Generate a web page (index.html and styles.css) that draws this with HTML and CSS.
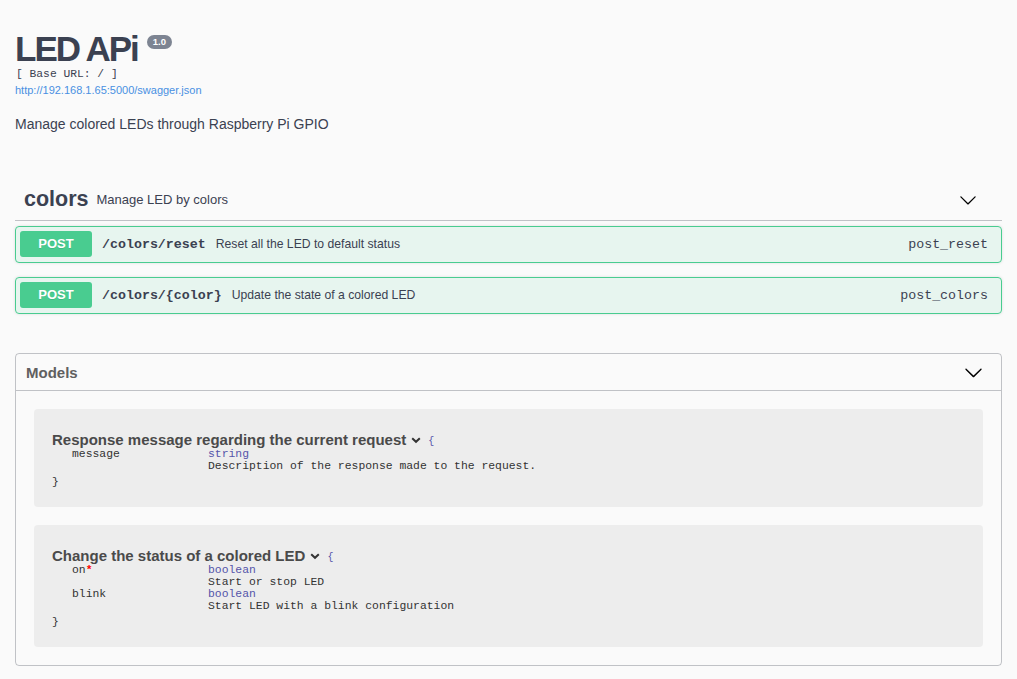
FILE: index.html
```html
<!DOCTYPE html>
<html lang="en">
<head>
<meta charset="utf-8">
<title>LED APi</title>
<link rel="stylesheet" href="styles.css">
</head>
<body>
<div class="wrapper">
  <div class="info">
    <h2 class="title"><span class="title-text">LED APi</span><span class="version">1.0</span></h2>
    <div class="base-url">[ Base URL: / ]</div>
    <a class="spec-link" href="#">http://192.168.1.65:5000/swagger.json</a>
    <p class="description">Manage colored LEDs through Raspberry Pi GPIO</p>
  </div>

  <section class="tag-section">
    <div class="tag-header">
      <h4 class="tag-title"><span class="tag-name">colors</span><small class="tag-desc">Manage LED by colors</small></h4>
      <svg class="chevron chevron-tag" viewBox="0 0 20 20"><path d="M17.418 6.109c.272-.268.709-.268.979 0s.271.701 0 .969l-7.908 7.83c-.27.268-.707.268-.979 0l-7.908-7.830c-.27-.268-.27-.701 0-.969.271-.268.709-.268.979 0L10 13.25l7.418-7.141z"/></svg>
    </div>
    <div class="ops">
      <div class="opblock">
        <span class="method">POST</span>
        <span class="path">/colors/reset</span>
        <span class="op-desc">Reset all the LED to default status</span>
        <span class="op-id">post_reset</span>
      </div>
      <div class="opblock">
        <span class="method">POST</span>
        <span class="path">/colors/{color}</span>
        <span class="op-desc">Update the state of a colored LED</span>
        <span class="op-id">post_colors</span>
      </div>
    </div>
  </section>

  <section class="models">
    <div class="models-header">
      <h4 class="models-title">Models</h4>
      <svg class="chevron chevron-models" viewBox="0 0 20 20"><path d="M17.418 6.109c.272-.268.709-.268.979 0s.271.701 0 .969l-7.908 7.83c-.27.268-.707.268-.979 0l-7.908-7.83c-.27-.268-.27-.701 0-.969.271-.268.709-.268.979 0L10 13.25l7.418-7.141z"/></svg>
    </div>
    <div class="models-body">
      <div class="model-box">
        <div class="model-title">Response message regarding the current request<svg class="toggle" viewBox="0 0 10 7"><polyline points="1.2,1.2 5,4.8 8.8,1.2"/></svg><span class="brace">{</span></div>
        <div class="props">
          <div class="prop">
            <span class="prop-name">message</span>
            <div class="prop-info">
              <span class="prop-type">string</span>
              <span class="prop-desc">Description of the response made to the request.</span>
            </div>
          </div>
        </div>
        <div class="brace-close">}</div>
      </div>

      <div class="model-box">
        <div class="model-title">Change the status of a colored LED<svg class="toggle" viewBox="0 0 10 7"><polyline points="1.2,1.2 5,4.8 8.8,1.2"/></svg><span class="brace">{</span></div>
        <div class="props">
          <div class="prop">
            <span class="prop-name">on<span class="required">*</span></span>
            <div class="prop-info">
              <span class="prop-type">boolean</span>
              <span class="prop-desc">Start or stop LED</span>
            </div>
          </div>
          <div class="prop">
            <span class="prop-name">blink</span>
            <div class="prop-info">
              <span class="prop-type">boolean</span>
              <span class="prop-desc">Start LED with a blink configuration</span>
            </div>
          </div>
        </div>
        <div class="brace-close">}</div>
      </div>
    </div>
  </section>
</div>
</body>
</html>
```

FILE: styles.css
```css
* { box-sizing: border-box; }

html, body {
  margin: 0;
  padding: 0;
  background: #fafafa;
}

body {
  font-family: "Liberation Sans", Arial, sans-serif;
  color: #3b4151;
}

.wrapper {
  padding: 30px 15px 0 15px;
}

/* ---------- info ---------- */
.title {
  display: flex;
  align-items: flex-start;
  margin: 0;
  font-size: 35px;
  line-height: 37px;
  font-weight: bold;
  color: #3b4151;
}

.title-text {
  letter-spacing: -2px;
}

.version {
  margin-left: 9px;
  margin-top: 5px;
  height: 14px;
  padding: 0 6px;
  border-radius: 7px;
  background: #7d8492;
  color: #fff;
  font-size: 9.5px;
  line-height: 14px;
  font-weight: bold;
  letter-spacing: 0;
}

.base-url {
  font-family: "Liberation Mono", "Courier New", monospace;
  font-size: 11.3px;
  line-height: 14px;
  color: #3b4151;
  padding-left: 1px;
}

.spec-link {
  display: block;
  margin-top: 2px;
  font-size: 11px;
  line-height: 14px;
  color: #4990e2;
  text-decoration: none;
}

.description {
  margin: 17px 0 0 0;
  font-size: 14px;
  line-height: 20px;
}

/* ---------- tag section ---------- */
.tag-header {
  display: flex;
  align-items: center;
  margin-top: 52px;
  padding: 0 0 6px 9px;
  border-bottom: 1px solid rgba(59, 65, 81, 0.3);
}

.tag-title {
  flex: 1;
  margin: 0;
  line-height: 26px;
}

.tag-name {
  font-size: 21.5px;
  font-weight: bold;
}

.tag-desc {
  margin-left: 8px;
  font-size: 13px;
  font-weight: normal;
  vertical-align: 2px;
}

.chevron {
  fill: #000;
  flex: none;
}

.chevron-tag {
  width: 18px;
  height: 18px;
  margin-right: 25px;
}

.ops {
  display: flex;
  flex-direction: column;
  gap: 14px;
  padding-top: 5px;
}

.opblock {
  display: flex;
  align-items: center;
  padding: 4px 13px 5px 4px;
  border: 1px solid #49cc90;
  border-radius: 4px;
  background: rgba(73, 204, 144, 0.1);
  box-shadow: 0 0 3px rgba(0, 0, 0, 0.12);
}

.method {
  flex: none;
  width: 72px;
  height: 26px;
  border-radius: 3px;
  background: #49cc90;
  color: #fff;
  font-size: 13px;
  line-height: 26px;
  font-weight: bold;
  text-align: center;
  text-shadow: 0 1px 0 rgba(0, 0, 0, 0.1);
}

.path {
  padding: 0 10px;
  font-family: "Liberation Mono", "Courier New", monospace;
  font-size: 13.3px;
  font-weight: bold;
  color: #3b4151;
}

.op-desc {
  flex: 1;
  font-size: 12.2px;
  color: #3b4151;
}

.op-id {
  font-family: "Liberation Mono", "Courier New", monospace;
  font-size: 13.3px;
  color: #3b4151;
}

/* ---------- models ---------- */
.models {
  margin-top: 39px;
  border: 1px solid rgba(59, 65, 81, 0.3);
  border-radius: 4px;
}

.models-header {
  display: flex;
  align-items: center;
  height: 37px;
  padding: 0 18px 0 10px;
  border-bottom: 1px solid rgba(59, 65, 81, 0.3);
}

.models-title {
  flex: 1;
  margin: 0;
  font-size: 15px;
  font-weight: bold;
  color: #606060;
}

.chevron-models {
  width: 19px;
  height: 19px;
}

.models-body {
  display: flex;
  flex-direction: column;
  gap: 18px;
  padding: 18px;
}

.model-box {
  padding: 22px 18px 19px 18px;
  border-radius: 4px;
  background: #ededed;
  font-family: "Liberation Mono", "Courier New", monospace;
  font-size: 11.4px;
  line-height: 12px;
  color: #333;
}

.model-title {
  display: flex;
  align-items: center;
  height: 17px;
  font-family: "Liberation Sans", Arial, sans-serif;
  font-size: 15px;
  line-height: 17px;
  font-weight: bold;
  color: #4a4a4a;
}

.toggle {
  width: 10px;
  height: 7px;
  margin: 2px 0 0 5px;
  fill: none;
  stroke: #333;
  stroke-width: 2;
}

.brace {
  margin: 5px 0 0 7px;
  font-family: "Liberation Mono", "Courier New", monospace;
  font-size: 10px;
  line-height: 12px;
  font-weight: normal;
  color: #55a;
}

.props {
  padding-left: 20px;
}

.prop {
  display: grid;
  grid-template-columns: 136px 1fr;
}

.prop-name {
  color: #333;
}

.required {
  color: #f00;
  font-weight: bold;
}

.prop-info {
  display: flex;
  flex-direction: column;
}

.prop-type {
  color: #55a;
}

.prop-desc {
  color: #333;
}

.brace-close {
  margin-top: 4px;
}
```
